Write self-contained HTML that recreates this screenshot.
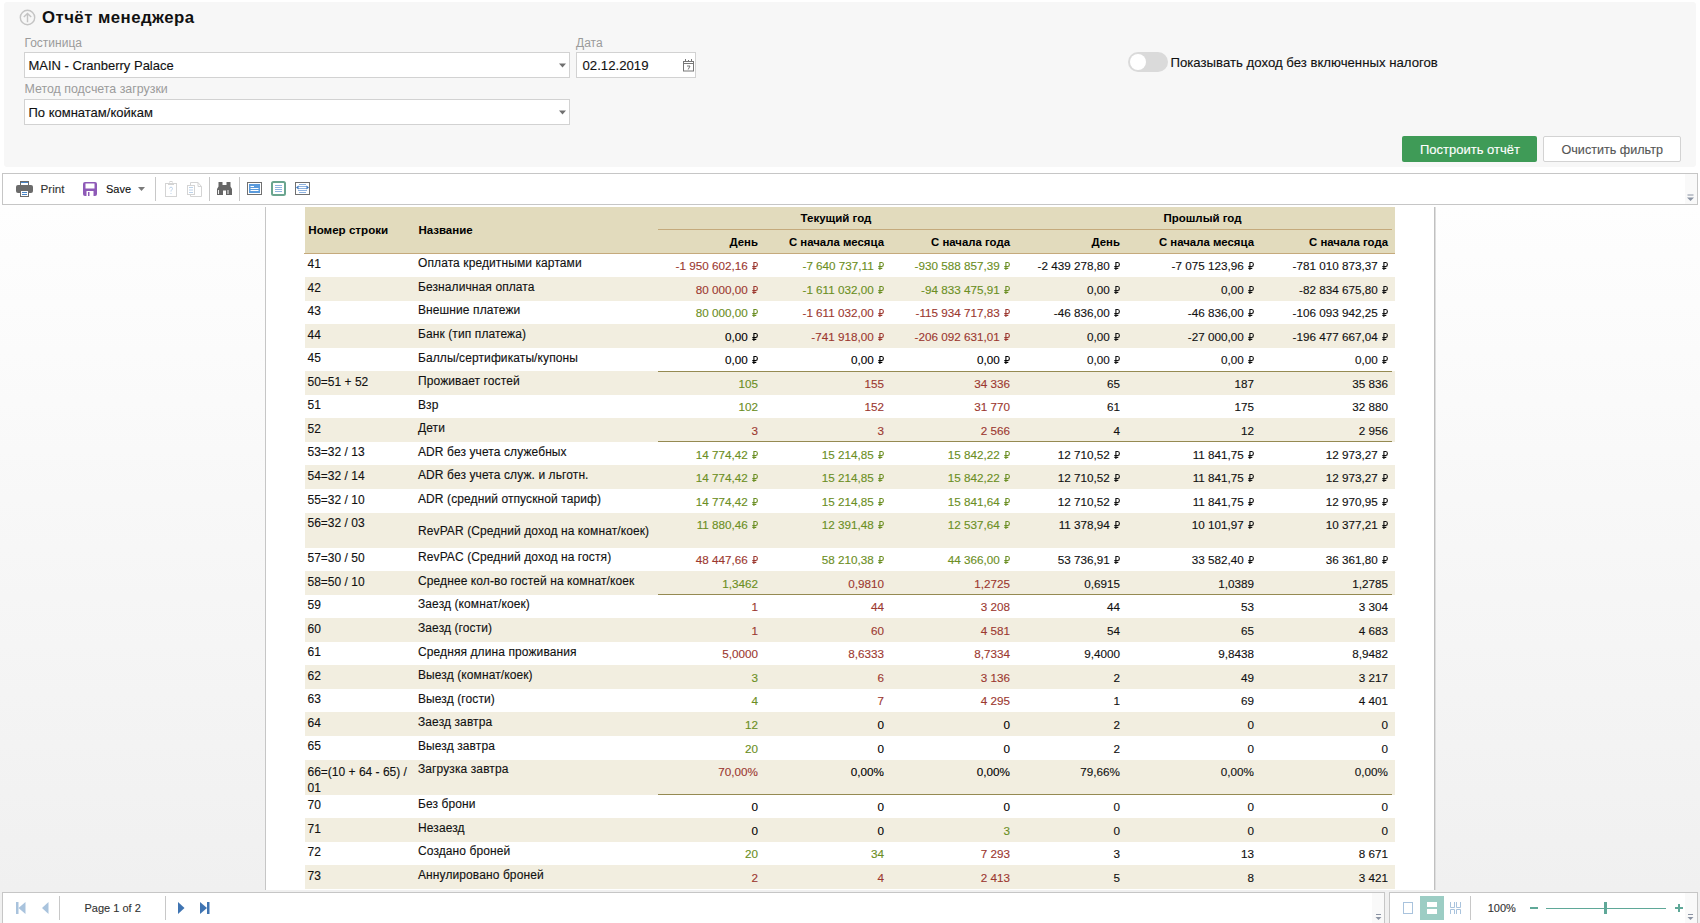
<!DOCTYPE html>
<html><head><meta charset="utf-8"><title>Отчёт менеджера</title>
<style>
html,body{margin:0;padding:0;}
body{width:1700px;height:923px;overflow:hidden;position:relative;background:#fff;font-family:"Liberation Sans",sans-serif;}
.a{position:absolute;box-sizing:border-box;}
.t{position:absolute;line-height:1;white-space:nowrap;-webkit-text-stroke:0.12px currentColor;}
.rb{display:inline-block;vertical-align:0;margin-left:0.5px;}
</style></head><body>
<div class="a" style="left:4px;top:2px;width:1692px;height:165px;background:#f7f7f7;border-radius:3px;"></div>
<svg class="a" style="left:19px;top:9px" width="17" height="17" viewBox="0 0 17 17"><circle cx="8.5" cy="8.5" r="7.2" fill="none" stroke="#c4c4c4" stroke-width="1.4"/><path d="M8.5 13.2V4.4M4.8 8.1L8.5 4.4L12.2 8.1" fill="none" stroke="#c4c4c4" stroke-width="1.4"/></svg>
<div class="t " style="left:42px;top:10.48px;font-size:16.8px;font-weight:700;color:#111;-webkit-text-stroke:0;letter-spacing:0.45px;">Отчёт менеджера</div>
<div class="t " style="left:24.5px;top:36.64px;font-size:12px;font-weight:400;color:#9b9b9b;-webkit-text-stroke:0;">Гостиница</div>
<div class="t " style="left:576px;top:36.64px;font-size:12px;font-weight:400;color:#9b9b9b;-webkit-text-stroke:0;">Дата</div>
<div class="t " style="left:24.5px;top:83.20px;font-size:12.4px;font-weight:400;color:#9b9b9b;-webkit-text-stroke:0;">Метод подсчета загрузки</div>
<div class="a" style="left:24px;top:52px;width:546px;height:26px;background:#fff;border:1px solid #d2d2d2;"></div>
<div class="a" style="left:576px;top:52px;width:120px;height:26px;background:#fff;border:1px solid #d2d2d2;"></div>
<div class="a" style="left:24px;top:99px;width:546px;height:26px;background:#fff;border:1px solid #d2d2d2;"></div>
<div class="t " style="left:28.5px;top:58.90px;font-size:13px;font-weight:400;color:#111;">MAIN - Cranberry Palace</div>
<div class="t " style="left:582.5px;top:58.73px;font-size:13.2px;font-weight:400;color:#111;">02.12.2019</div>
<div class="t " style="left:28.5px;top:106.00px;font-size:13px;font-weight:400;color:#111;">По комнатам/койкам</div>
<svg class="a" style="left:558.5px;top:62.5px" width="7" height="5" viewBox="0 0 7 5"><path d="M0 0.5H7L3.5 4.5Z" fill="#707070"/></svg>
<svg class="a" style="left:558.5px;top:109.5px" width="7" height="5" viewBox="0 0 7 5"><path d="M0 0.5H7L3.5 4.5Z" fill="#707070"/></svg>
<svg class="a" style="left:683px;top:58px" width="11" height="14" viewBox="0 0 11 14"><rect x="0.5" y="3.5" width="10" height="9.5" fill="none" stroke="#777" stroke-width="1"/><path d="M0.5 5.5H10.5" stroke="#777"/><path d="M2.5 1V4M8.5 1V4M5.5 2V4" stroke="#777"/><path d="M4 8H7L5.2 11.5" fill="none" stroke="#777" stroke-width="1"/></svg>
<div class="a" style="left:1128px;top:52px;width:40px;height:20px;border-radius:10px;background:#dadada;"></div>
<div class="a" style="left:1130px;top:54px;width:16px;height:16px;border-radius:8px;background:#fff;"></div>
<div class="t " style="left:1170.5px;top:55.73px;font-size:13.2px;font-weight:400;color:#111;">Показывать доход без включенных налогов</div>
<div class="a" style="left:1402px;top:136px;width:135px;height:26px;border-radius:2px;background:#3f9b57;"></div>
<div class="t " style="left:1420px;top:143.20px;font-size:13px;font-weight:400;color:#fff;">Построить отчёт</div>
<div class="a" style="left:1543px;top:136px;width:138px;height:26px;border-radius:2px;background:#fff;border:1px solid #d3d3d3;"></div>
<div class="t " style="left:1561.5px;top:143.53px;font-size:12.6px;font-weight:400;color:#555;">Очистить фильтр</div>
<div class="a" style="left:2px;top:173px;width:1696px;height:32px;background:#fff;border:1px solid #c6c6c6;"></div>
<div class="a" style="left:1685px;top:174px;width:12px;height:30px;background:#f9f9f9;"></div>
<svg class="a" style="left:1686px;top:194px" width="9" height="8" viewBox="0 0 9 8"><path d="M1.5 1H7.5" stroke="#8a93a3" stroke-width="1"/><path d="M1 3.5H8L4.5 7Z" fill="#8a93a3"/></svg>
<svg class="a" style="left:16px;top:181px" width="17" height="16" viewBox="0 0 17 16"><rect x="4.5" y="0.5" width="8" height="4" fill="#fff" stroke="#6b6b6b"/><rect x="0" y="4" width="17" height="8" rx="2" fill="#6b6b6b"/><rect x="4.5" y="9.5" width="8" height="6" fill="#fff" stroke="#6b6b6b"/><path d="M6 11.5H11M6 13.5H11" stroke="#4a86c8"/><path d="M5 1.5H12" stroke="#4a86c8"/></svg>
<div class="t " style="left:40.5px;top:182.70px;font-size:11.7px;font-weight:400;color:#333;">Print</div>
<svg class="a" style="left:83px;top:182px" width="14" height="14" viewBox="0 0 14 14"><rect x="0" y="0" width="14" height="14" rx="2" fill="#8e5ab7"/><rect x="2.5" y="1.5" width="9" height="5" fill="#fff"/><rect x="3.5" y="9" width="7" height="5" fill="#fff"/><rect x="5" y="10" width="1.5" height="4" fill="#8e5ab7"/></svg>
<div class="t " style="left:106px;top:183.99px;font-size:11px;font-weight:400;color:#111;">Save</div>
<svg class="a" style="left:137.5px;top:186.5px" width="7" height="4" viewBox="0 0 7 4"><path d="M0 0H7L3.5 4Z" fill="#7a7a7a"/></svg>
<div class="a" style="left:155px;top:177px;width:1px;height:24px;background:#c8c8c8;"></div>
<div class="a" style="left:209px;top:177px;width:1px;height:24px;background:#c8c8c8;"></div>
<div class="a" style="left:239px;top:177px;width:1px;height:24px;background:#c8c8c8;"></div>
<svg class="a" style="left:165px;top:181px" width="13" height="16" viewBox="0 0 13 16"><rect x="0.5" y="2.5" width="11" height="13" fill="#fff" stroke="#d4d4d4"/><rect x="3" y="2" width="6" height="2" fill="#d4d4d4"/><rect x="5" y="0.5" width="2" height="2" fill="none" stroke="#d4d4d4"/><path d="M4.5 7.5C4.5 5.7 7.5 5.7 7.5 7.5C7.5 8.8 6 8.8 6 10.5" fill="none" stroke="#bcd2ea"/><path d="M5.5 12.5H6.5" stroke="#bcd2ea"/></svg>
<svg class="a" style="left:187px;top:182px" width="16" height="15" viewBox="0 0 16 15"><path d="M3.5 3V14.5H14.5V4.5L11 0.5H3.5V3" fill="#fff" stroke="#d4d4d4"/><path d="M11 0.5V4.5H14.5" fill="none" stroke="#d4d4d4"/><rect x="0.5" y="3.5" width="7" height="9" fill="#fff" stroke="#d4d4d4"/><path d="M2 5.5H6M2 8H6M2 10.5H6" stroke="#bcd2ea"/></svg>
<svg class="a" style="left:217px;top:182px" width="15" height="13" viewBox="0 0 15 13"><path d="M1.5 0H5.5V3H9.5V0H13.5V4.5L15 7V13H9V8.5H6V13H0V7L1.5 4.5Z" fill="#666"/><path d="M1.5 8V12M11 8V12" stroke="#fff" stroke-width="0.9"/></svg>
<svg class="a" style="left:247px;top:182px" width="15" height="13" viewBox="0 0 15 13"><rect x="0.5" y="0.5" width="14" height="12" fill="#fff" stroke="#707070"/><rect x="2" y="2" width="11" height="9" fill="#5b9bdc"/><path d="M3.5 4.5H7M3.5 6.5H11.5M3.5 8.5H11.5" stroke="#fff" stroke-width="1"/></svg>
<svg class="a" style="left:271px;top:181px" width="15" height="15" viewBox="0 0 15 15"><rect x="1" y="1" width="13" height="13" rx="1.5" fill="#fff" stroke="#6aa58f" stroke-width="2"/><path d="M4 4.5H11M4 6.5H11M4 8.5H11M4 10.5H11" stroke="#8fb3e0" stroke-width="1"/></svg>
<svg class="a" style="left:295px;top:182px" width="15" height="13" viewBox="0 0 15 13"><rect x="0.5" y="0.5" width="14" height="12" fill="#fff" stroke="#707070"/><path d="M4 2.5H11M3 4.5H12M3 6.5H12M3 8.5H12M4 10.5H11" stroke="#8fb3e0" stroke-width="1"/><path d="M1 5.5L3.5 3.5V7.5Z M14 5.5L11.5 3.5V7.5Z" fill="#3d78c0"/></svg>
<div class="a" style="left:0px;top:205px;width:1700px;height:685px;overflow:hidden;background:linear-gradient(#fefefe,#f0f0f0);">
<div class="a" style="left:265px;top:2px;width:1px;height:700px;background:#c6c6c6;"></div>
<div class="a" style="left:266px;top:0px;width:1168px;height:700px;background:#fff;"></div>
<div class="a" style="left:1434px;top:2px;width:1px;height:700px;background:#c0c0c0;"></div>
<div class="a" style="left:1435px;top:2px;width:1px;height:700px;background:#dedede;"></div>
</div>
<div class="a" style="left:305px;top:207px;width:1090px;height:46px;background:#e2dbbd;"></div>
<div class="a" style="left:304px;top:253px;width:1091px;height:1px;background:#c5aa7c;"></div>
<div class="a" style="left:658px;top:229px;width:734px;height:1px;background:#c5aa7c;"></div>
<div class="t " style="left:308.3px;top:224.28px;font-size:11.6px;font-weight:700;color:#000;-webkit-text-stroke:0;">Номер строки</div>
<div class="t " style="left:418.4px;top:224.87px;font-size:11.5px;font-weight:700;color:#000;-webkit-text-stroke:0;">Название</div>
<div class="t" style="left:636px;width:400px;text-align:center;top:212.67px;font-size:11.5px;font-weight:700;color:#000;-webkit-text-stroke:0;">Текущий год</div>
<div class="t" style="left:1002.5px;width:400px;text-align:center;top:212.67px;font-size:11.5px;font-weight:700;color:#000;-webkit-text-stroke:0;">Прошлый год</div>
<div class="t " style="right:942px;top:236.95px;font-size:11.4px;font-weight:700;color:#000;-webkit-text-stroke:0;">День</div>
<div class="t " style="right:816px;top:236.95px;font-size:11.4px;font-weight:700;color:#000;-webkit-text-stroke:0;">С начала месяца</div>
<div class="t " style="right:690px;top:236.95px;font-size:11.4px;font-weight:700;color:#000;-webkit-text-stroke:0;">С начала года</div>
<div class="t " style="right:580px;top:236.95px;font-size:11.4px;font-weight:700;color:#000;-webkit-text-stroke:0;">День</div>
<div class="t " style="right:446px;top:236.95px;font-size:11.4px;font-weight:700;color:#000;-webkit-text-stroke:0;">С начала месяца</div>
<div class="t " style="right:312px;top:236.95px;font-size:11.4px;font-weight:700;color:#000;-webkit-text-stroke:0;">С начала года</div>
<div class="t " style="left:307.5px;top:258.04px;font-size:12px;font-weight:400;color:#111;">41</div>
<div class="t " style="left:418px;top:257.34px;font-size:12px;font-weight:400;color:#111;letter-spacing:0.1px;">Оплата кредитными картами</div>
<div class="t " style="right:942px;top:260.10px;font-size:11.7px;font-weight:400;color:#9c3830;">-1&nbsp;950&nbsp;602,16&nbsp;<svg class="rb" width="6.5" height="8" viewBox="0 0 6.5 8"><path d="M1.9 8V0.55H3.8C5.9 0.55 5.9 4.45 3.8 4.45H0.3M0.3 6.35H4.3" fill="none" stroke="currentColor" stroke-width="1.1"/></svg></div>
<div class="t " style="right:816px;top:260.10px;font-size:11.7px;font-weight:400;color:#6b8e23;">-7&nbsp;640&nbsp;737,11&nbsp;<svg class="rb" width="6.5" height="8" viewBox="0 0 6.5 8"><path d="M1.9 8V0.55H3.8C5.9 0.55 5.9 4.45 3.8 4.45H0.3M0.3 6.35H4.3" fill="none" stroke="currentColor" stroke-width="1.1"/></svg></div>
<div class="t " style="right:690px;top:260.10px;font-size:11.7px;font-weight:400;color:#6b8e23;">-930&nbsp;588&nbsp;857,39&nbsp;<svg class="rb" width="6.5" height="8" viewBox="0 0 6.5 8"><path d="M1.9 8V0.55H3.8C5.9 0.55 5.9 4.45 3.8 4.45H0.3M0.3 6.35H4.3" fill="none" stroke="currentColor" stroke-width="1.1"/></svg></div>
<div class="t " style="right:580px;top:260.10px;font-size:11.7px;font-weight:400;color:#111;">-2&nbsp;439&nbsp;278,80&nbsp;<svg class="rb" width="6.5" height="8" viewBox="0 0 6.5 8"><path d="M1.9 8V0.55H3.8C5.9 0.55 5.9 4.45 3.8 4.45H0.3M0.3 6.35H4.3" fill="none" stroke="currentColor" stroke-width="1.1"/></svg></div>
<div class="t " style="right:446px;top:260.10px;font-size:11.7px;font-weight:400;color:#111;">-7&nbsp;075&nbsp;123,96&nbsp;<svg class="rb" width="6.5" height="8" viewBox="0 0 6.5 8"><path d="M1.9 8V0.55H3.8C5.9 0.55 5.9 4.45 3.8 4.45H0.3M0.3 6.35H4.3" fill="none" stroke="currentColor" stroke-width="1.1"/></svg></div>
<div class="t " style="right:312px;top:260.10px;font-size:11.7px;font-weight:400;color:#111;">-781&nbsp;010&nbsp;873,37&nbsp;<svg class="rb" width="6.5" height="8" viewBox="0 0 6.5 8"><path d="M1.9 8V0.55H3.8C5.9 0.55 5.9 4.45 3.8 4.45H0.3M0.3 6.35H4.3" fill="none" stroke="currentColor" stroke-width="1.1"/></svg></div>
<div class="a" style="left:305px;top:277.05px;width:1090px;height:23.55px;background:#f2eee0;"></div>
<div class="t " style="left:307.5px;top:281.59px;font-size:12px;font-weight:400;color:#111;">42</div>
<div class="t " style="left:418px;top:280.89px;font-size:12px;font-weight:400;color:#111;letter-spacing:0.1px;">Безналичная оплата</div>
<div class="t " style="right:942px;top:283.65px;font-size:11.7px;font-weight:400;color:#9c3830;">80&nbsp;000,00&nbsp;<svg class="rb" width="6.5" height="8" viewBox="0 0 6.5 8"><path d="M1.9 8V0.55H3.8C5.9 0.55 5.9 4.45 3.8 4.45H0.3M0.3 6.35H4.3" fill="none" stroke="currentColor" stroke-width="1.1"/></svg></div>
<div class="t " style="right:816px;top:283.65px;font-size:11.7px;font-weight:400;color:#6b8e23;">-1&nbsp;611&nbsp;032,00&nbsp;<svg class="rb" width="6.5" height="8" viewBox="0 0 6.5 8"><path d="M1.9 8V0.55H3.8C5.9 0.55 5.9 4.45 3.8 4.45H0.3M0.3 6.35H4.3" fill="none" stroke="currentColor" stroke-width="1.1"/></svg></div>
<div class="t " style="right:690px;top:283.65px;font-size:11.7px;font-weight:400;color:#6b8e23;">-94&nbsp;833&nbsp;475,91&nbsp;<svg class="rb" width="6.5" height="8" viewBox="0 0 6.5 8"><path d="M1.9 8V0.55H3.8C5.9 0.55 5.9 4.45 3.8 4.45H0.3M0.3 6.35H4.3" fill="none" stroke="currentColor" stroke-width="1.1"/></svg></div>
<div class="t " style="right:580px;top:283.65px;font-size:11.7px;font-weight:400;color:#111;">0,00&nbsp;<svg class="rb" width="6.5" height="8" viewBox="0 0 6.5 8"><path d="M1.9 8V0.55H3.8C5.9 0.55 5.9 4.45 3.8 4.45H0.3M0.3 6.35H4.3" fill="none" stroke="currentColor" stroke-width="1.1"/></svg></div>
<div class="t " style="right:446px;top:283.65px;font-size:11.7px;font-weight:400;color:#111;">0,00&nbsp;<svg class="rb" width="6.5" height="8" viewBox="0 0 6.5 8"><path d="M1.9 8V0.55H3.8C5.9 0.55 5.9 4.45 3.8 4.45H0.3M0.3 6.35H4.3" fill="none" stroke="currentColor" stroke-width="1.1"/></svg></div>
<div class="t " style="right:312px;top:283.65px;font-size:11.7px;font-weight:400;color:#111;">-82&nbsp;834&nbsp;675,80&nbsp;<svg class="rb" width="6.5" height="8" viewBox="0 0 6.5 8"><path d="M1.9 8V0.55H3.8C5.9 0.55 5.9 4.45 3.8 4.45H0.3M0.3 6.35H4.3" fill="none" stroke="currentColor" stroke-width="1.1"/></svg></div>
<div class="t " style="left:307.5px;top:305.14px;font-size:12px;font-weight:400;color:#111;">43</div>
<div class="t " style="left:418px;top:304.44px;font-size:12px;font-weight:400;color:#111;letter-spacing:0.1px;">Внешние платежи</div>
<div class="t " style="right:942px;top:307.20px;font-size:11.7px;font-weight:400;color:#6b8e23;">80&nbsp;000,00&nbsp;<svg class="rb" width="6.5" height="8" viewBox="0 0 6.5 8"><path d="M1.9 8V0.55H3.8C5.9 0.55 5.9 4.45 3.8 4.45H0.3M0.3 6.35H4.3" fill="none" stroke="currentColor" stroke-width="1.1"/></svg></div>
<div class="t " style="right:816px;top:307.20px;font-size:11.7px;font-weight:400;color:#9c3830;">-1&nbsp;611&nbsp;032,00&nbsp;<svg class="rb" width="6.5" height="8" viewBox="0 0 6.5 8"><path d="M1.9 8V0.55H3.8C5.9 0.55 5.9 4.45 3.8 4.45H0.3M0.3 6.35H4.3" fill="none" stroke="currentColor" stroke-width="1.1"/></svg></div>
<div class="t " style="right:690px;top:307.20px;font-size:11.7px;font-weight:400;color:#9c3830;">-115&nbsp;934&nbsp;717,83&nbsp;<svg class="rb" width="6.5" height="8" viewBox="0 0 6.5 8"><path d="M1.9 8V0.55H3.8C5.9 0.55 5.9 4.45 3.8 4.45H0.3M0.3 6.35H4.3" fill="none" stroke="currentColor" stroke-width="1.1"/></svg></div>
<div class="t " style="right:580px;top:307.20px;font-size:11.7px;font-weight:400;color:#111;">-46&nbsp;836,00&nbsp;<svg class="rb" width="6.5" height="8" viewBox="0 0 6.5 8"><path d="M1.9 8V0.55H3.8C5.9 0.55 5.9 4.45 3.8 4.45H0.3M0.3 6.35H4.3" fill="none" stroke="currentColor" stroke-width="1.1"/></svg></div>
<div class="t " style="right:446px;top:307.20px;font-size:11.7px;font-weight:400;color:#111;">-46&nbsp;836,00&nbsp;<svg class="rb" width="6.5" height="8" viewBox="0 0 6.5 8"><path d="M1.9 8V0.55H3.8C5.9 0.55 5.9 4.45 3.8 4.45H0.3M0.3 6.35H4.3" fill="none" stroke="currentColor" stroke-width="1.1"/></svg></div>
<div class="t " style="right:312px;top:307.20px;font-size:11.7px;font-weight:400;color:#111;">-106&nbsp;093&nbsp;942,25&nbsp;<svg class="rb" width="6.5" height="8" viewBox="0 0 6.5 8"><path d="M1.9 8V0.55H3.8C5.9 0.55 5.9 4.45 3.8 4.45H0.3M0.3 6.35H4.3" fill="none" stroke="currentColor" stroke-width="1.1"/></svg></div>
<div class="a" style="left:305px;top:324.15px;width:1090px;height:23.55px;background:#f2eee0;"></div>
<div class="t " style="left:307.5px;top:328.69px;font-size:12px;font-weight:400;color:#111;">44</div>
<div class="t " style="left:418px;top:327.99px;font-size:12px;font-weight:400;color:#111;letter-spacing:0.1px;">Банк (тип платежа)</div>
<div class="t " style="right:942px;top:330.75px;font-size:11.7px;font-weight:400;color:#000;">0,00&nbsp;<svg class="rb" width="6.5" height="8" viewBox="0 0 6.5 8"><path d="M1.9 8V0.55H3.8C5.9 0.55 5.9 4.45 3.8 4.45H0.3M0.3 6.35H4.3" fill="none" stroke="currentColor" stroke-width="1.1"/></svg></div>
<div class="t " style="right:816px;top:330.75px;font-size:11.7px;font-weight:400;color:#9c3830;">-741&nbsp;918,00&nbsp;<svg class="rb" width="6.5" height="8" viewBox="0 0 6.5 8"><path d="M1.9 8V0.55H3.8C5.9 0.55 5.9 4.45 3.8 4.45H0.3M0.3 6.35H4.3" fill="none" stroke="currentColor" stroke-width="1.1"/></svg></div>
<div class="t " style="right:690px;top:330.75px;font-size:11.7px;font-weight:400;color:#9c3830;">-206&nbsp;092&nbsp;631,01&nbsp;<svg class="rb" width="6.5" height="8" viewBox="0 0 6.5 8"><path d="M1.9 8V0.55H3.8C5.9 0.55 5.9 4.45 3.8 4.45H0.3M0.3 6.35H4.3" fill="none" stroke="currentColor" stroke-width="1.1"/></svg></div>
<div class="t " style="right:580px;top:330.75px;font-size:11.7px;font-weight:400;color:#111;">0,00&nbsp;<svg class="rb" width="6.5" height="8" viewBox="0 0 6.5 8"><path d="M1.9 8V0.55H3.8C5.9 0.55 5.9 4.45 3.8 4.45H0.3M0.3 6.35H4.3" fill="none" stroke="currentColor" stroke-width="1.1"/></svg></div>
<div class="t " style="right:446px;top:330.75px;font-size:11.7px;font-weight:400;color:#111;">-27&nbsp;000,00&nbsp;<svg class="rb" width="6.5" height="8" viewBox="0 0 6.5 8"><path d="M1.9 8V0.55H3.8C5.9 0.55 5.9 4.45 3.8 4.45H0.3M0.3 6.35H4.3" fill="none" stroke="currentColor" stroke-width="1.1"/></svg></div>
<div class="t " style="right:312px;top:330.75px;font-size:11.7px;font-weight:400;color:#111;">-196&nbsp;477&nbsp;667,04&nbsp;<svg class="rb" width="6.5" height="8" viewBox="0 0 6.5 8"><path d="M1.9 8V0.55H3.8C5.9 0.55 5.9 4.45 3.8 4.45H0.3M0.3 6.35H4.3" fill="none" stroke="currentColor" stroke-width="1.1"/></svg></div>
<div class="t " style="left:307.5px;top:352.24px;font-size:12px;font-weight:400;color:#111;">45</div>
<div class="t " style="left:418px;top:351.54px;font-size:12px;font-weight:400;color:#111;letter-spacing:0.1px;">Баллы/сертификаты/купоны</div>
<div class="t " style="right:942px;top:354.30px;font-size:11.7px;font-weight:400;color:#000;">0,00&nbsp;<svg class="rb" width="6.5" height="8" viewBox="0 0 6.5 8"><path d="M1.9 8V0.55H3.8C5.9 0.55 5.9 4.45 3.8 4.45H0.3M0.3 6.35H4.3" fill="none" stroke="currentColor" stroke-width="1.1"/></svg></div>
<div class="t " style="right:816px;top:354.30px;font-size:11.7px;font-weight:400;color:#000;">0,00&nbsp;<svg class="rb" width="6.5" height="8" viewBox="0 0 6.5 8"><path d="M1.9 8V0.55H3.8C5.9 0.55 5.9 4.45 3.8 4.45H0.3M0.3 6.35H4.3" fill="none" stroke="currentColor" stroke-width="1.1"/></svg></div>
<div class="t " style="right:690px;top:354.30px;font-size:11.7px;font-weight:400;color:#000;">0,00&nbsp;<svg class="rb" width="6.5" height="8" viewBox="0 0 6.5 8"><path d="M1.9 8V0.55H3.8C5.9 0.55 5.9 4.45 3.8 4.45H0.3M0.3 6.35H4.3" fill="none" stroke="currentColor" stroke-width="1.1"/></svg></div>
<div class="t " style="right:580px;top:354.30px;font-size:11.7px;font-weight:400;color:#111;">0,00&nbsp;<svg class="rb" width="6.5" height="8" viewBox="0 0 6.5 8"><path d="M1.9 8V0.55H3.8C5.9 0.55 5.9 4.45 3.8 4.45H0.3M0.3 6.35H4.3" fill="none" stroke="currentColor" stroke-width="1.1"/></svg></div>
<div class="t " style="right:446px;top:354.30px;font-size:11.7px;font-weight:400;color:#111;">0,00&nbsp;<svg class="rb" width="6.5" height="8" viewBox="0 0 6.5 8"><path d="M1.9 8V0.55H3.8C5.9 0.55 5.9 4.45 3.8 4.45H0.3M0.3 6.35H4.3" fill="none" stroke="currentColor" stroke-width="1.1"/></svg></div>
<div class="t " style="right:312px;top:354.30px;font-size:11.7px;font-weight:400;color:#111;">0,00&nbsp;<svg class="rb" width="6.5" height="8" viewBox="0 0 6.5 8"><path d="M1.9 8V0.55H3.8C5.9 0.55 5.9 4.45 3.8 4.45H0.3M0.3 6.35H4.3" fill="none" stroke="currentColor" stroke-width="1.1"/></svg></div>
<div class="a" style="left:305px;top:371.25px;width:1090px;height:23.55px;background:#f2eee0;"></div>
<div class="a" style="left:658px;top:370.65px;width:734px;height:1px;background:#958a52;"></div>
<div class="t " style="left:307.5px;top:375.79px;font-size:12px;font-weight:400;color:#111;">50=51 + 52</div>
<div class="t " style="left:418px;top:375.09px;font-size:12px;font-weight:400;color:#111;letter-spacing:0.1px;">Проживает гостей</div>
<div class="t " style="right:942px;top:377.85px;font-size:11.7px;font-weight:400;color:#6b8e23;">105</div>
<div class="t " style="right:816px;top:377.85px;font-size:11.7px;font-weight:400;color:#9c3830;">155</div>
<div class="t " style="right:690px;top:377.85px;font-size:11.7px;font-weight:400;color:#9c3830;">34&nbsp;336</div>
<div class="t " style="right:580px;top:377.85px;font-size:11.7px;font-weight:400;color:#111;">65</div>
<div class="t " style="right:446px;top:377.85px;font-size:11.7px;font-weight:400;color:#111;">187</div>
<div class="t " style="right:312px;top:377.85px;font-size:11.7px;font-weight:400;color:#111;">35&nbsp;836</div>
<div class="t " style="left:307.5px;top:399.34px;font-size:12px;font-weight:400;color:#111;">51</div>
<div class="t " style="left:418px;top:398.64px;font-size:12px;font-weight:400;color:#111;letter-spacing:0.1px;">Взр</div>
<div class="t " style="right:942px;top:401.40px;font-size:11.7px;font-weight:400;color:#6b8e23;">102</div>
<div class="t " style="right:816px;top:401.40px;font-size:11.7px;font-weight:400;color:#9c3830;">152</div>
<div class="t " style="right:690px;top:401.40px;font-size:11.7px;font-weight:400;color:#9c3830;">31&nbsp;770</div>
<div class="t " style="right:580px;top:401.40px;font-size:11.7px;font-weight:400;color:#111;">61</div>
<div class="t " style="right:446px;top:401.40px;font-size:11.7px;font-weight:400;color:#111;">175</div>
<div class="t " style="right:312px;top:401.40px;font-size:11.7px;font-weight:400;color:#111;">32&nbsp;880</div>
<div class="a" style="left:305px;top:418.35px;width:1090px;height:23.55px;background:#f2eee0;"></div>
<div class="t " style="left:307.5px;top:422.89px;font-size:12px;font-weight:400;color:#111;">52</div>
<div class="t " style="left:418px;top:422.19px;font-size:12px;font-weight:400;color:#111;letter-spacing:0.1px;">Дети</div>
<div class="t " style="right:942px;top:424.95px;font-size:11.7px;font-weight:400;color:#9c3830;">3</div>
<div class="t " style="right:816px;top:424.95px;font-size:11.7px;font-weight:400;color:#9c3830;">3</div>
<div class="t " style="right:690px;top:424.95px;font-size:11.7px;font-weight:400;color:#9c3830;">2&nbsp;566</div>
<div class="t " style="right:580px;top:424.95px;font-size:11.7px;font-weight:400;color:#111;">4</div>
<div class="t " style="right:446px;top:424.95px;font-size:11.7px;font-weight:400;color:#111;">12</div>
<div class="t " style="right:312px;top:424.95px;font-size:11.7px;font-weight:400;color:#111;">2&nbsp;956</div>
<div class="a" style="left:658px;top:441.30px;width:734px;height:1px;background:#958a52;"></div>
<div class="t " style="left:307.5px;top:446.44px;font-size:12px;font-weight:400;color:#111;">53=32 / 13</div>
<div class="t " style="left:418px;top:445.74px;font-size:12px;font-weight:400;color:#111;letter-spacing:0.1px;">ADR без учета служебных</div>
<div class="t " style="right:942px;top:448.50px;font-size:11.7px;font-weight:400;color:#6b8e23;">14&nbsp;774,42&nbsp;<svg class="rb" width="6.5" height="8" viewBox="0 0 6.5 8"><path d="M1.9 8V0.55H3.8C5.9 0.55 5.9 4.45 3.8 4.45H0.3M0.3 6.35H4.3" fill="none" stroke="currentColor" stroke-width="1.1"/></svg></div>
<div class="t " style="right:816px;top:448.50px;font-size:11.7px;font-weight:400;color:#6b8e23;">15&nbsp;214,85&nbsp;<svg class="rb" width="6.5" height="8" viewBox="0 0 6.5 8"><path d="M1.9 8V0.55H3.8C5.9 0.55 5.9 4.45 3.8 4.45H0.3M0.3 6.35H4.3" fill="none" stroke="currentColor" stroke-width="1.1"/></svg></div>
<div class="t " style="right:690px;top:448.50px;font-size:11.7px;font-weight:400;color:#6b8e23;">15&nbsp;842,22&nbsp;<svg class="rb" width="6.5" height="8" viewBox="0 0 6.5 8"><path d="M1.9 8V0.55H3.8C5.9 0.55 5.9 4.45 3.8 4.45H0.3M0.3 6.35H4.3" fill="none" stroke="currentColor" stroke-width="1.1"/></svg></div>
<div class="t " style="right:580px;top:448.50px;font-size:11.7px;font-weight:400;color:#111;">12&nbsp;710,52&nbsp;<svg class="rb" width="6.5" height="8" viewBox="0 0 6.5 8"><path d="M1.9 8V0.55H3.8C5.9 0.55 5.9 4.45 3.8 4.45H0.3M0.3 6.35H4.3" fill="none" stroke="currentColor" stroke-width="1.1"/></svg></div>
<div class="t " style="right:446px;top:448.50px;font-size:11.7px;font-weight:400;color:#111;">11&nbsp;841,75&nbsp;<svg class="rb" width="6.5" height="8" viewBox="0 0 6.5 8"><path d="M1.9 8V0.55H3.8C5.9 0.55 5.9 4.45 3.8 4.45H0.3M0.3 6.35H4.3" fill="none" stroke="currentColor" stroke-width="1.1"/></svg></div>
<div class="t " style="right:312px;top:448.50px;font-size:11.7px;font-weight:400;color:#111;">12&nbsp;973,27&nbsp;<svg class="rb" width="6.5" height="8" viewBox="0 0 6.5 8"><path d="M1.9 8V0.55H3.8C5.9 0.55 5.9 4.45 3.8 4.45H0.3M0.3 6.35H4.3" fill="none" stroke="currentColor" stroke-width="1.1"/></svg></div>
<div class="a" style="left:305px;top:465.45px;width:1090px;height:23.55px;background:#f2eee0;"></div>
<div class="t " style="left:307.5px;top:469.99px;font-size:12px;font-weight:400;color:#111;">54=32 / 14</div>
<div class="t " style="left:418px;top:469.29px;font-size:12px;font-weight:400;color:#111;letter-spacing:0.1px;">ADR без учета служ. и льготн.</div>
<div class="t " style="right:942px;top:472.05px;font-size:11.7px;font-weight:400;color:#6b8e23;">14&nbsp;774,42&nbsp;<svg class="rb" width="6.5" height="8" viewBox="0 0 6.5 8"><path d="M1.9 8V0.55H3.8C5.9 0.55 5.9 4.45 3.8 4.45H0.3M0.3 6.35H4.3" fill="none" stroke="currentColor" stroke-width="1.1"/></svg></div>
<div class="t " style="right:816px;top:472.05px;font-size:11.7px;font-weight:400;color:#6b8e23;">15&nbsp;214,85&nbsp;<svg class="rb" width="6.5" height="8" viewBox="0 0 6.5 8"><path d="M1.9 8V0.55H3.8C5.9 0.55 5.9 4.45 3.8 4.45H0.3M0.3 6.35H4.3" fill="none" stroke="currentColor" stroke-width="1.1"/></svg></div>
<div class="t " style="right:690px;top:472.05px;font-size:11.7px;font-weight:400;color:#6b8e23;">15&nbsp;842,22&nbsp;<svg class="rb" width="6.5" height="8" viewBox="0 0 6.5 8"><path d="M1.9 8V0.55H3.8C5.9 0.55 5.9 4.45 3.8 4.45H0.3M0.3 6.35H4.3" fill="none" stroke="currentColor" stroke-width="1.1"/></svg></div>
<div class="t " style="right:580px;top:472.05px;font-size:11.7px;font-weight:400;color:#111;">12&nbsp;710,52&nbsp;<svg class="rb" width="6.5" height="8" viewBox="0 0 6.5 8"><path d="M1.9 8V0.55H3.8C5.9 0.55 5.9 4.45 3.8 4.45H0.3M0.3 6.35H4.3" fill="none" stroke="currentColor" stroke-width="1.1"/></svg></div>
<div class="t " style="right:446px;top:472.05px;font-size:11.7px;font-weight:400;color:#111;">11&nbsp;841,75&nbsp;<svg class="rb" width="6.5" height="8" viewBox="0 0 6.5 8"><path d="M1.9 8V0.55H3.8C5.9 0.55 5.9 4.45 3.8 4.45H0.3M0.3 6.35H4.3" fill="none" stroke="currentColor" stroke-width="1.1"/></svg></div>
<div class="t " style="right:312px;top:472.05px;font-size:11.7px;font-weight:400;color:#111;">12&nbsp;973,27&nbsp;<svg class="rb" width="6.5" height="8" viewBox="0 0 6.5 8"><path d="M1.9 8V0.55H3.8C5.9 0.55 5.9 4.45 3.8 4.45H0.3M0.3 6.35H4.3" fill="none" stroke="currentColor" stroke-width="1.1"/></svg></div>
<div class="t " style="left:307.5px;top:493.54px;font-size:12px;font-weight:400;color:#111;">55=32 / 10</div>
<div class="t " style="left:418px;top:492.84px;font-size:12px;font-weight:400;color:#111;letter-spacing:0.1px;">ADR (средний отпускной тариф)</div>
<div class="t " style="right:942px;top:495.60px;font-size:11.7px;font-weight:400;color:#6b8e23;">14&nbsp;774,42&nbsp;<svg class="rb" width="6.5" height="8" viewBox="0 0 6.5 8"><path d="M1.9 8V0.55H3.8C5.9 0.55 5.9 4.45 3.8 4.45H0.3M0.3 6.35H4.3" fill="none" stroke="currentColor" stroke-width="1.1"/></svg></div>
<div class="t " style="right:816px;top:495.60px;font-size:11.7px;font-weight:400;color:#6b8e23;">15&nbsp;214,85&nbsp;<svg class="rb" width="6.5" height="8" viewBox="0 0 6.5 8"><path d="M1.9 8V0.55H3.8C5.9 0.55 5.9 4.45 3.8 4.45H0.3M0.3 6.35H4.3" fill="none" stroke="currentColor" stroke-width="1.1"/></svg></div>
<div class="t " style="right:690px;top:495.60px;font-size:11.7px;font-weight:400;color:#6b8e23;">15&nbsp;841,64&nbsp;<svg class="rb" width="6.5" height="8" viewBox="0 0 6.5 8"><path d="M1.9 8V0.55H3.8C5.9 0.55 5.9 4.45 3.8 4.45H0.3M0.3 6.35H4.3" fill="none" stroke="currentColor" stroke-width="1.1"/></svg></div>
<div class="t " style="right:580px;top:495.60px;font-size:11.7px;font-weight:400;color:#111;">12&nbsp;710,52&nbsp;<svg class="rb" width="6.5" height="8" viewBox="0 0 6.5 8"><path d="M1.9 8V0.55H3.8C5.9 0.55 5.9 4.45 3.8 4.45H0.3M0.3 6.35H4.3" fill="none" stroke="currentColor" stroke-width="1.1"/></svg></div>
<div class="t " style="right:446px;top:495.60px;font-size:11.7px;font-weight:400;color:#111;">11&nbsp;841,75&nbsp;<svg class="rb" width="6.5" height="8" viewBox="0 0 6.5 8"><path d="M1.9 8V0.55H3.8C5.9 0.55 5.9 4.45 3.8 4.45H0.3M0.3 6.35H4.3" fill="none" stroke="currentColor" stroke-width="1.1"/></svg></div>
<div class="t " style="right:312px;top:495.60px;font-size:11.7px;font-weight:400;color:#111;">12&nbsp;970,95&nbsp;<svg class="rb" width="6.5" height="8" viewBox="0 0 6.5 8"><path d="M1.9 8V0.55H3.8C5.9 0.55 5.9 4.45 3.8 4.45H0.3M0.3 6.35H4.3" fill="none" stroke="currentColor" stroke-width="1.1"/></svg></div>
<div class="a" style="left:305px;top:512.55px;width:1090px;height:35.00px;background:#f2eee0;"></div>
<div class="t " style="left:307.5px;top:517.09px;font-size:12px;font-weight:400;color:#111;">56=32 / 03</div>
<div class="t " style="left:418px;top:524.89px;font-size:12px;font-weight:400;color:#111;letter-spacing:0.1px;">RevPAR (Средний доход на комнат/коек)</div>
<div class="t " style="right:942px;top:519.15px;font-size:11.7px;font-weight:400;color:#6b8e23;">11&nbsp;880,46&nbsp;<svg class="rb" width="6.5" height="8" viewBox="0 0 6.5 8"><path d="M1.9 8V0.55H3.8C5.9 0.55 5.9 4.45 3.8 4.45H0.3M0.3 6.35H4.3" fill="none" stroke="currentColor" stroke-width="1.1"/></svg></div>
<div class="t " style="right:816px;top:519.15px;font-size:11.7px;font-weight:400;color:#6b8e23;">12&nbsp;391,48&nbsp;<svg class="rb" width="6.5" height="8" viewBox="0 0 6.5 8"><path d="M1.9 8V0.55H3.8C5.9 0.55 5.9 4.45 3.8 4.45H0.3M0.3 6.35H4.3" fill="none" stroke="currentColor" stroke-width="1.1"/></svg></div>
<div class="t " style="right:690px;top:519.15px;font-size:11.7px;font-weight:400;color:#6b8e23;">12&nbsp;537,64&nbsp;<svg class="rb" width="6.5" height="8" viewBox="0 0 6.5 8"><path d="M1.9 8V0.55H3.8C5.9 0.55 5.9 4.45 3.8 4.45H0.3M0.3 6.35H4.3" fill="none" stroke="currentColor" stroke-width="1.1"/></svg></div>
<div class="t " style="right:580px;top:519.15px;font-size:11.7px;font-weight:400;color:#111;">11&nbsp;378,94&nbsp;<svg class="rb" width="6.5" height="8" viewBox="0 0 6.5 8"><path d="M1.9 8V0.55H3.8C5.9 0.55 5.9 4.45 3.8 4.45H0.3M0.3 6.35H4.3" fill="none" stroke="currentColor" stroke-width="1.1"/></svg></div>
<div class="t " style="right:446px;top:519.15px;font-size:11.7px;font-weight:400;color:#111;">10&nbsp;101,97&nbsp;<svg class="rb" width="6.5" height="8" viewBox="0 0 6.5 8"><path d="M1.9 8V0.55H3.8C5.9 0.55 5.9 4.45 3.8 4.45H0.3M0.3 6.35H4.3" fill="none" stroke="currentColor" stroke-width="1.1"/></svg></div>
<div class="t " style="right:312px;top:519.15px;font-size:11.7px;font-weight:400;color:#111;">10&nbsp;377,21&nbsp;<svg class="rb" width="6.5" height="8" viewBox="0 0 6.5 8"><path d="M1.9 8V0.55H3.8C5.9 0.55 5.9 4.45 3.8 4.45H0.3M0.3 6.35H4.3" fill="none" stroke="currentColor" stroke-width="1.1"/></svg></div>
<div class="t " style="left:307.5px;top:552.09px;font-size:12px;font-weight:400;color:#111;">57=30 / 50</div>
<div class="t " style="left:418px;top:551.39px;font-size:12px;font-weight:400;color:#111;letter-spacing:0.1px;">RevPAC (Средний доход на гостя)</div>
<div class="t " style="right:942px;top:554.15px;font-size:11.7px;font-weight:400;color:#9c3830;">48&nbsp;447,66&nbsp;<svg class="rb" width="6.5" height="8" viewBox="0 0 6.5 8"><path d="M1.9 8V0.55H3.8C5.9 0.55 5.9 4.45 3.8 4.45H0.3M0.3 6.35H4.3" fill="none" stroke="currentColor" stroke-width="1.1"/></svg></div>
<div class="t " style="right:816px;top:554.15px;font-size:11.7px;font-weight:400;color:#6b8e23;">58&nbsp;210,38&nbsp;<svg class="rb" width="6.5" height="8" viewBox="0 0 6.5 8"><path d="M1.9 8V0.55H3.8C5.9 0.55 5.9 4.45 3.8 4.45H0.3M0.3 6.35H4.3" fill="none" stroke="currentColor" stroke-width="1.1"/></svg></div>
<div class="t " style="right:690px;top:554.15px;font-size:11.7px;font-weight:400;color:#6b8e23;">44&nbsp;366,00&nbsp;<svg class="rb" width="6.5" height="8" viewBox="0 0 6.5 8"><path d="M1.9 8V0.55H3.8C5.9 0.55 5.9 4.45 3.8 4.45H0.3M0.3 6.35H4.3" fill="none" stroke="currentColor" stroke-width="1.1"/></svg></div>
<div class="t " style="right:580px;top:554.15px;font-size:11.7px;font-weight:400;color:#111;">53&nbsp;736,91&nbsp;<svg class="rb" width="6.5" height="8" viewBox="0 0 6.5 8"><path d="M1.9 8V0.55H3.8C5.9 0.55 5.9 4.45 3.8 4.45H0.3M0.3 6.35H4.3" fill="none" stroke="currentColor" stroke-width="1.1"/></svg></div>
<div class="t " style="right:446px;top:554.15px;font-size:11.7px;font-weight:400;color:#111;">33&nbsp;582,40&nbsp;<svg class="rb" width="6.5" height="8" viewBox="0 0 6.5 8"><path d="M1.9 8V0.55H3.8C5.9 0.55 5.9 4.45 3.8 4.45H0.3M0.3 6.35H4.3" fill="none" stroke="currentColor" stroke-width="1.1"/></svg></div>
<div class="t " style="right:312px;top:554.15px;font-size:11.7px;font-weight:400;color:#111;">36&nbsp;361,80&nbsp;<svg class="rb" width="6.5" height="8" viewBox="0 0 6.5 8"><path d="M1.9 8V0.55H3.8C5.9 0.55 5.9 4.45 3.8 4.45H0.3M0.3 6.35H4.3" fill="none" stroke="currentColor" stroke-width="1.1"/></svg></div>
<div class="a" style="left:305px;top:571.10px;width:1090px;height:23.55px;background:#f2eee0;"></div>
<div class="t " style="left:307.5px;top:575.64px;font-size:12px;font-weight:400;color:#111;">58=50 / 10</div>
<div class="t " style="left:418px;top:574.94px;font-size:12px;font-weight:400;color:#111;letter-spacing:0.1px;">Среднее кол-во гостей на комнат/коек</div>
<div class="t " style="right:942px;top:577.70px;font-size:11.7px;font-weight:400;color:#6b8e23;">1,3462</div>
<div class="t " style="right:816px;top:577.70px;font-size:11.7px;font-weight:400;color:#9c3830;">0,9810</div>
<div class="t " style="right:690px;top:577.70px;font-size:11.7px;font-weight:400;color:#9c3830;">1,2725</div>
<div class="t " style="right:580px;top:577.70px;font-size:11.7px;font-weight:400;color:#111;">0,6915</div>
<div class="t " style="right:446px;top:577.70px;font-size:11.7px;font-weight:400;color:#111;">1,0389</div>
<div class="t " style="right:312px;top:577.70px;font-size:11.7px;font-weight:400;color:#111;">1,2785</div>
<div class="a" style="left:658px;top:594.05px;width:734px;height:1px;background:#958a52;"></div>
<div class="t " style="left:307.5px;top:599.19px;font-size:12px;font-weight:400;color:#111;">59</div>
<div class="t " style="left:418px;top:598.49px;font-size:12px;font-weight:400;color:#111;letter-spacing:0.1px;">Заезд (комнат/коек)</div>
<div class="t " style="right:942px;top:601.25px;font-size:11.7px;font-weight:400;color:#9c3830;">1</div>
<div class="t " style="right:816px;top:601.25px;font-size:11.7px;font-weight:400;color:#9c3830;">44</div>
<div class="t " style="right:690px;top:601.25px;font-size:11.7px;font-weight:400;color:#9c3830;">3&nbsp;208</div>
<div class="t " style="right:580px;top:601.25px;font-size:11.7px;font-weight:400;color:#111;">44</div>
<div class="t " style="right:446px;top:601.25px;font-size:11.7px;font-weight:400;color:#111;">53</div>
<div class="t " style="right:312px;top:601.25px;font-size:11.7px;font-weight:400;color:#111;">3&nbsp;304</div>
<div class="a" style="left:305px;top:618.20px;width:1090px;height:23.55px;background:#f2eee0;"></div>
<div class="t " style="left:307.5px;top:622.74px;font-size:12px;font-weight:400;color:#111;">60</div>
<div class="t " style="left:418px;top:622.04px;font-size:12px;font-weight:400;color:#111;letter-spacing:0.1px;">Заезд (гости)</div>
<div class="t " style="right:942px;top:624.80px;font-size:11.7px;font-weight:400;color:#9c3830;">1</div>
<div class="t " style="right:816px;top:624.80px;font-size:11.7px;font-weight:400;color:#9c3830;">60</div>
<div class="t " style="right:690px;top:624.80px;font-size:11.7px;font-weight:400;color:#9c3830;">4&nbsp;581</div>
<div class="t " style="right:580px;top:624.80px;font-size:11.7px;font-weight:400;color:#111;">54</div>
<div class="t " style="right:446px;top:624.80px;font-size:11.7px;font-weight:400;color:#111;">65</div>
<div class="t " style="right:312px;top:624.80px;font-size:11.7px;font-weight:400;color:#111;">4&nbsp;683</div>
<div class="t " style="left:307.5px;top:646.29px;font-size:12px;font-weight:400;color:#111;">61</div>
<div class="t " style="left:418px;top:645.59px;font-size:12px;font-weight:400;color:#111;letter-spacing:0.1px;">Средняя длина проживания</div>
<div class="t " style="right:942px;top:648.35px;font-size:11.7px;font-weight:400;color:#9c3830;">5,0000</div>
<div class="t " style="right:816px;top:648.35px;font-size:11.7px;font-weight:400;color:#9c3830;">8,6333</div>
<div class="t " style="right:690px;top:648.35px;font-size:11.7px;font-weight:400;color:#9c3830;">8,7334</div>
<div class="t " style="right:580px;top:648.35px;font-size:11.7px;font-weight:400;color:#111;">9,4000</div>
<div class="t " style="right:446px;top:648.35px;font-size:11.7px;font-weight:400;color:#111;">9,8438</div>
<div class="t " style="right:312px;top:648.35px;font-size:11.7px;font-weight:400;color:#111;">8,9482</div>
<div class="a" style="left:305px;top:665.30px;width:1090px;height:23.55px;background:#f2eee0;"></div>
<div class="t " style="left:307.5px;top:669.84px;font-size:12px;font-weight:400;color:#111;">62</div>
<div class="t " style="left:418px;top:669.14px;font-size:12px;font-weight:400;color:#111;letter-spacing:0.1px;">Выезд (комнат/коек)</div>
<div class="t " style="right:942px;top:671.90px;font-size:11.7px;font-weight:400;color:#6b8e23;">3</div>
<div class="t " style="right:816px;top:671.90px;font-size:11.7px;font-weight:400;color:#9c3830;">6</div>
<div class="t " style="right:690px;top:671.90px;font-size:11.7px;font-weight:400;color:#9c3830;">3&nbsp;136</div>
<div class="t " style="right:580px;top:671.90px;font-size:11.7px;font-weight:400;color:#111;">2</div>
<div class="t " style="right:446px;top:671.90px;font-size:11.7px;font-weight:400;color:#111;">49</div>
<div class="t " style="right:312px;top:671.90px;font-size:11.7px;font-weight:400;color:#111;">3&nbsp;217</div>
<div class="t " style="left:307.5px;top:693.39px;font-size:12px;font-weight:400;color:#111;">63</div>
<div class="t " style="left:418px;top:692.69px;font-size:12px;font-weight:400;color:#111;letter-spacing:0.1px;">Выезд (гости)</div>
<div class="t " style="right:942px;top:695.45px;font-size:11.7px;font-weight:400;color:#6b8e23;">4</div>
<div class="t " style="right:816px;top:695.45px;font-size:11.7px;font-weight:400;color:#9c3830;">7</div>
<div class="t " style="right:690px;top:695.45px;font-size:11.7px;font-weight:400;color:#9c3830;">4&nbsp;295</div>
<div class="t " style="right:580px;top:695.45px;font-size:11.7px;font-weight:400;color:#111;">1</div>
<div class="t " style="right:446px;top:695.45px;font-size:11.7px;font-weight:400;color:#111;">69</div>
<div class="t " style="right:312px;top:695.45px;font-size:11.7px;font-weight:400;color:#111;">4&nbsp;401</div>
<div class="a" style="left:305px;top:712.40px;width:1090px;height:23.55px;background:#f2eee0;"></div>
<div class="t " style="left:307.5px;top:716.94px;font-size:12px;font-weight:400;color:#111;">64</div>
<div class="t " style="left:418px;top:716.24px;font-size:12px;font-weight:400;color:#111;letter-spacing:0.1px;">Заезд завтра</div>
<div class="t " style="right:942px;top:719.00px;font-size:11.7px;font-weight:400;color:#6b8e23;">12</div>
<div class="t " style="right:816px;top:719.00px;font-size:11.7px;font-weight:400;color:#000;">0</div>
<div class="t " style="right:690px;top:719.00px;font-size:11.7px;font-weight:400;color:#000;">0</div>
<div class="t " style="right:580px;top:719.00px;font-size:11.7px;font-weight:400;color:#111;">2</div>
<div class="t " style="right:446px;top:719.00px;font-size:11.7px;font-weight:400;color:#111;">0</div>
<div class="t " style="right:312px;top:719.00px;font-size:11.7px;font-weight:400;color:#111;">0</div>
<div class="t " style="left:307.5px;top:740.49px;font-size:12px;font-weight:400;color:#111;">65</div>
<div class="t " style="left:418px;top:739.79px;font-size:12px;font-weight:400;color:#111;letter-spacing:0.1px;">Выезд завтра</div>
<div class="t " style="right:942px;top:742.55px;font-size:11.7px;font-weight:400;color:#6b8e23;">20</div>
<div class="t " style="right:816px;top:742.55px;font-size:11.7px;font-weight:400;color:#000;">0</div>
<div class="t " style="right:690px;top:742.55px;font-size:11.7px;font-weight:400;color:#000;">0</div>
<div class="t " style="right:580px;top:742.55px;font-size:11.7px;font-weight:400;color:#111;">2</div>
<div class="t " style="right:446px;top:742.55px;font-size:11.7px;font-weight:400;color:#111;">0</div>
<div class="t " style="right:312px;top:742.55px;font-size:11.7px;font-weight:400;color:#111;">0</div>
<div class="a" style="left:305px;top:759.50px;width:1090px;height:35.00px;background:#f2eee0;"></div>
<div class="t " style="left:307.5px;top:764.04px;font-size:12px;font-weight:400;color:#111;line-height:16px;">66=(10 + 64 - 65) /<br>01</div>
<div class="t " style="left:418px;top:763.34px;font-size:12px;font-weight:400;color:#111;letter-spacing:0.1px;">Загрузка завтра</div>
<div class="t " style="right:942px;top:766.10px;font-size:11.7px;font-weight:400;color:#9c3830;">70,00%</div>
<div class="t " style="right:816px;top:766.10px;font-size:11.7px;font-weight:400;color:#000;">0,00%</div>
<div class="t " style="right:690px;top:766.10px;font-size:11.7px;font-weight:400;color:#000;">0,00%</div>
<div class="t " style="right:580px;top:766.10px;font-size:11.7px;font-weight:400;color:#111;">79,66%</div>
<div class="t " style="right:446px;top:766.10px;font-size:11.7px;font-weight:400;color:#111;">0,00%</div>
<div class="t " style="right:312px;top:766.10px;font-size:11.7px;font-weight:400;color:#111;">0,00%</div>
<div class="a" style="left:658px;top:793.90px;width:734px;height:1px;background:#958a52;"></div>
<div class="t " style="left:307.5px;top:799.04px;font-size:12px;font-weight:400;color:#111;">70</div>
<div class="t " style="left:418px;top:798.34px;font-size:12px;font-weight:400;color:#111;letter-spacing:0.1px;">Без брони</div>
<div class="t " style="right:942px;top:801.10px;font-size:11.7px;font-weight:400;color:#000;">0</div>
<div class="t " style="right:816px;top:801.10px;font-size:11.7px;font-weight:400;color:#000;">0</div>
<div class="t " style="right:690px;top:801.10px;font-size:11.7px;font-weight:400;color:#000;">0</div>
<div class="t " style="right:580px;top:801.10px;font-size:11.7px;font-weight:400;color:#111;">0</div>
<div class="t " style="right:446px;top:801.10px;font-size:11.7px;font-weight:400;color:#111;">0</div>
<div class="t " style="right:312px;top:801.10px;font-size:11.7px;font-weight:400;color:#111;">0</div>
<div class="a" style="left:305px;top:818.05px;width:1090px;height:23.55px;background:#f2eee0;"></div>
<div class="t " style="left:307.5px;top:822.59px;font-size:12px;font-weight:400;color:#111;">71</div>
<div class="t " style="left:418px;top:821.89px;font-size:12px;font-weight:400;color:#111;letter-spacing:0.1px;">Незаезд</div>
<div class="t " style="right:942px;top:824.65px;font-size:11.7px;font-weight:400;color:#000;">0</div>
<div class="t " style="right:816px;top:824.65px;font-size:11.7px;font-weight:400;color:#000;">0</div>
<div class="t " style="right:690px;top:824.65px;font-size:11.7px;font-weight:400;color:#6b8e23;">3</div>
<div class="t " style="right:580px;top:824.65px;font-size:11.7px;font-weight:400;color:#111;">0</div>
<div class="t " style="right:446px;top:824.65px;font-size:11.7px;font-weight:400;color:#111;">0</div>
<div class="t " style="right:312px;top:824.65px;font-size:11.7px;font-weight:400;color:#111;">0</div>
<div class="t " style="left:307.5px;top:846.14px;font-size:12px;font-weight:400;color:#111;">72</div>
<div class="t " style="left:418px;top:845.44px;font-size:12px;font-weight:400;color:#111;letter-spacing:0.1px;">Создано броней</div>
<div class="t " style="right:942px;top:848.20px;font-size:11.7px;font-weight:400;color:#6b8e23;">20</div>
<div class="t " style="right:816px;top:848.20px;font-size:11.7px;font-weight:400;color:#6b8e23;">34</div>
<div class="t " style="right:690px;top:848.20px;font-size:11.7px;font-weight:400;color:#9c3830;">7&nbsp;293</div>
<div class="t " style="right:580px;top:848.20px;font-size:11.7px;font-weight:400;color:#111;">3</div>
<div class="t " style="right:446px;top:848.20px;font-size:11.7px;font-weight:400;color:#111;">13</div>
<div class="t " style="right:312px;top:848.20px;font-size:11.7px;font-weight:400;color:#111;">8&nbsp;671</div>
<div class="a" style="left:305px;top:865.15px;width:1090px;height:23.55px;background:#f2eee0;"></div>
<div class="t " style="left:307.5px;top:869.69px;font-size:12px;font-weight:400;color:#111;">73</div>
<div class="t " style="left:418px;top:868.99px;font-size:12px;font-weight:400;color:#111;letter-spacing:0.1px;">Аннулировано броней</div>
<div class="t " style="right:942px;top:871.75px;font-size:11.7px;font-weight:400;color:#9c3830;">2</div>
<div class="t " style="right:816px;top:871.75px;font-size:11.7px;font-weight:400;color:#9c3830;">4</div>
<div class="t " style="right:690px;top:871.75px;font-size:11.7px;font-weight:400;color:#9c3830;">2&nbsp;413</div>
<div class="t " style="right:580px;top:871.75px;font-size:11.7px;font-weight:400;color:#111;">5</div>
<div class="t " style="right:446px;top:871.75px;font-size:11.7px;font-weight:400;color:#111;">8</div>
<div class="t " style="right:312px;top:871.75px;font-size:11.7px;font-weight:400;color:#111;">3&nbsp;421</div>
<div class="a" style="left:0px;top:890px;width:1700px;height:33px;background:#f0f0f0;"></div>
<div class="a" style="left:2px;top:892px;width:1383px;height:31px;background:#fff;border:1px solid #c6c6c6;border-bottom:none;"></div>
<div class="a" style="left:1372px;top:893px;width:12px;height:30px;background:#f9f9f9;"></div>
<svg class="a" style="left:1374px;top:913px" width="9" height="8" viewBox="0 0 9 8"><path d="M2 1.5H7" stroke="#8a93a3" stroke-width="1"/><path d="M1.5 4H7.5L4.5 7Z" fill="#8a93a3"/></svg>
<div class="a" style="left:1389px;top:892px;width:309px;height:31px;background:#fff;border:1px solid #c6c6c6;border-bottom:none;"></div>
<div class="a" style="left:1685px;top:893px;width:12px;height:30px;background:#f9f9f9;"></div>
<svg class="a" style="left:1686px;top:913px" width="9" height="8" viewBox="0 0 9 8"><path d="M2 1.5H7" stroke="#8a93a3" stroke-width="1"/><path d="M1.5 4H7.5L4.5 7Z" fill="#8a93a3"/></svg>
<svg class="a" style="left:16px;top:902px" width="10" height="12" viewBox="0 0 10 12"><rect x="0" y="0" width="2.5" height="12" fill="#a9c3dd"/><path d="M9.5 0V12L2.5 6Z" fill="#a9c3dd"/></svg>
<svg class="a" style="left:42px;top:902px" width="7" height="12" viewBox="0 0 7 12"><path d="M6.5 0V12L0 6Z" fill="#a9c3dd"/></svg>
<div class="a" style="left:59px;top:896px;width:1px;height:24px;background:#c8c8c8;"></div>
<div class="t " style="left:84.5px;top:903.29px;font-size:11px;font-weight:400;color:#333;">Page 1 of 2</div>
<div class="a" style="left:165px;top:896px;width:1px;height:24px;background:#c8c8c8;"></div>
<svg class="a" style="left:178px;top:902px" width="7" height="12" viewBox="0 0 7 12"><path d="M0 0V12L6.5 6Z" fill="#3f74b2"/></svg>
<svg class="a" style="left:200px;top:902px" width="10" height="12" viewBox="0 0 10 12"><path d="M0 0V12L7 6Z" fill="#3f74b2"/><rect x="7" y="0" width="2.5" height="12" fill="#3f74b2"/></svg>
<div class="a" style="left:1403px;top:902px;width:10px;height:12px;border:1px solid #a9c3dd;"></div>
<div class="a" style="left:1420px;top:896px;width:24px;height:24px;background:#9ccdc4;"></div>
<div class="a" style="left:1427px;top:902px;width:10px;height:5px;background:#fff;"></div>
<div class="a" style="left:1427px;top:909px;width:10px;height:5px;background:#fff;"></div>
<svg class="a" style="left:1449px;top:902px" width="13" height="13" viewBox="0 0 13 13"><path d="M1.5 0V5.5H5.5V0M7.5 0V5.5H11.5V0M1.5 12V7.5H5.5V12M7.5 12V7.5H11.5V12" fill="none" stroke="#a9c3dd" stroke-width="1"/></svg>
<div class="a" style="left:1470px;top:896px;width:1px;height:24px;background:#c8c8c8;"></div>
<div class="t " style="left:1487.7px;top:902.99px;font-size:11px;font-weight:400;color:#333;">100%</div>
<div class="a" style="left:1530px;top:907px;width:8px;height:2px;background:#5fa898;"></div>
<div class="a" style="left:1546px;top:908px;width:120px;height:1px;background:#5fa898;"></div>
<div class="a" style="left:1604px;top:902px;width:3px;height:12px;background:#5fa898;"></div>
<div class="a" style="left:1675px;top:907px;width:8px;height:2px;background:#5fa898;"></div>
<div class="a" style="left:1678px;top:904px;width:2px;height:8px;background:#5fa898;"></div>
</body></html>
